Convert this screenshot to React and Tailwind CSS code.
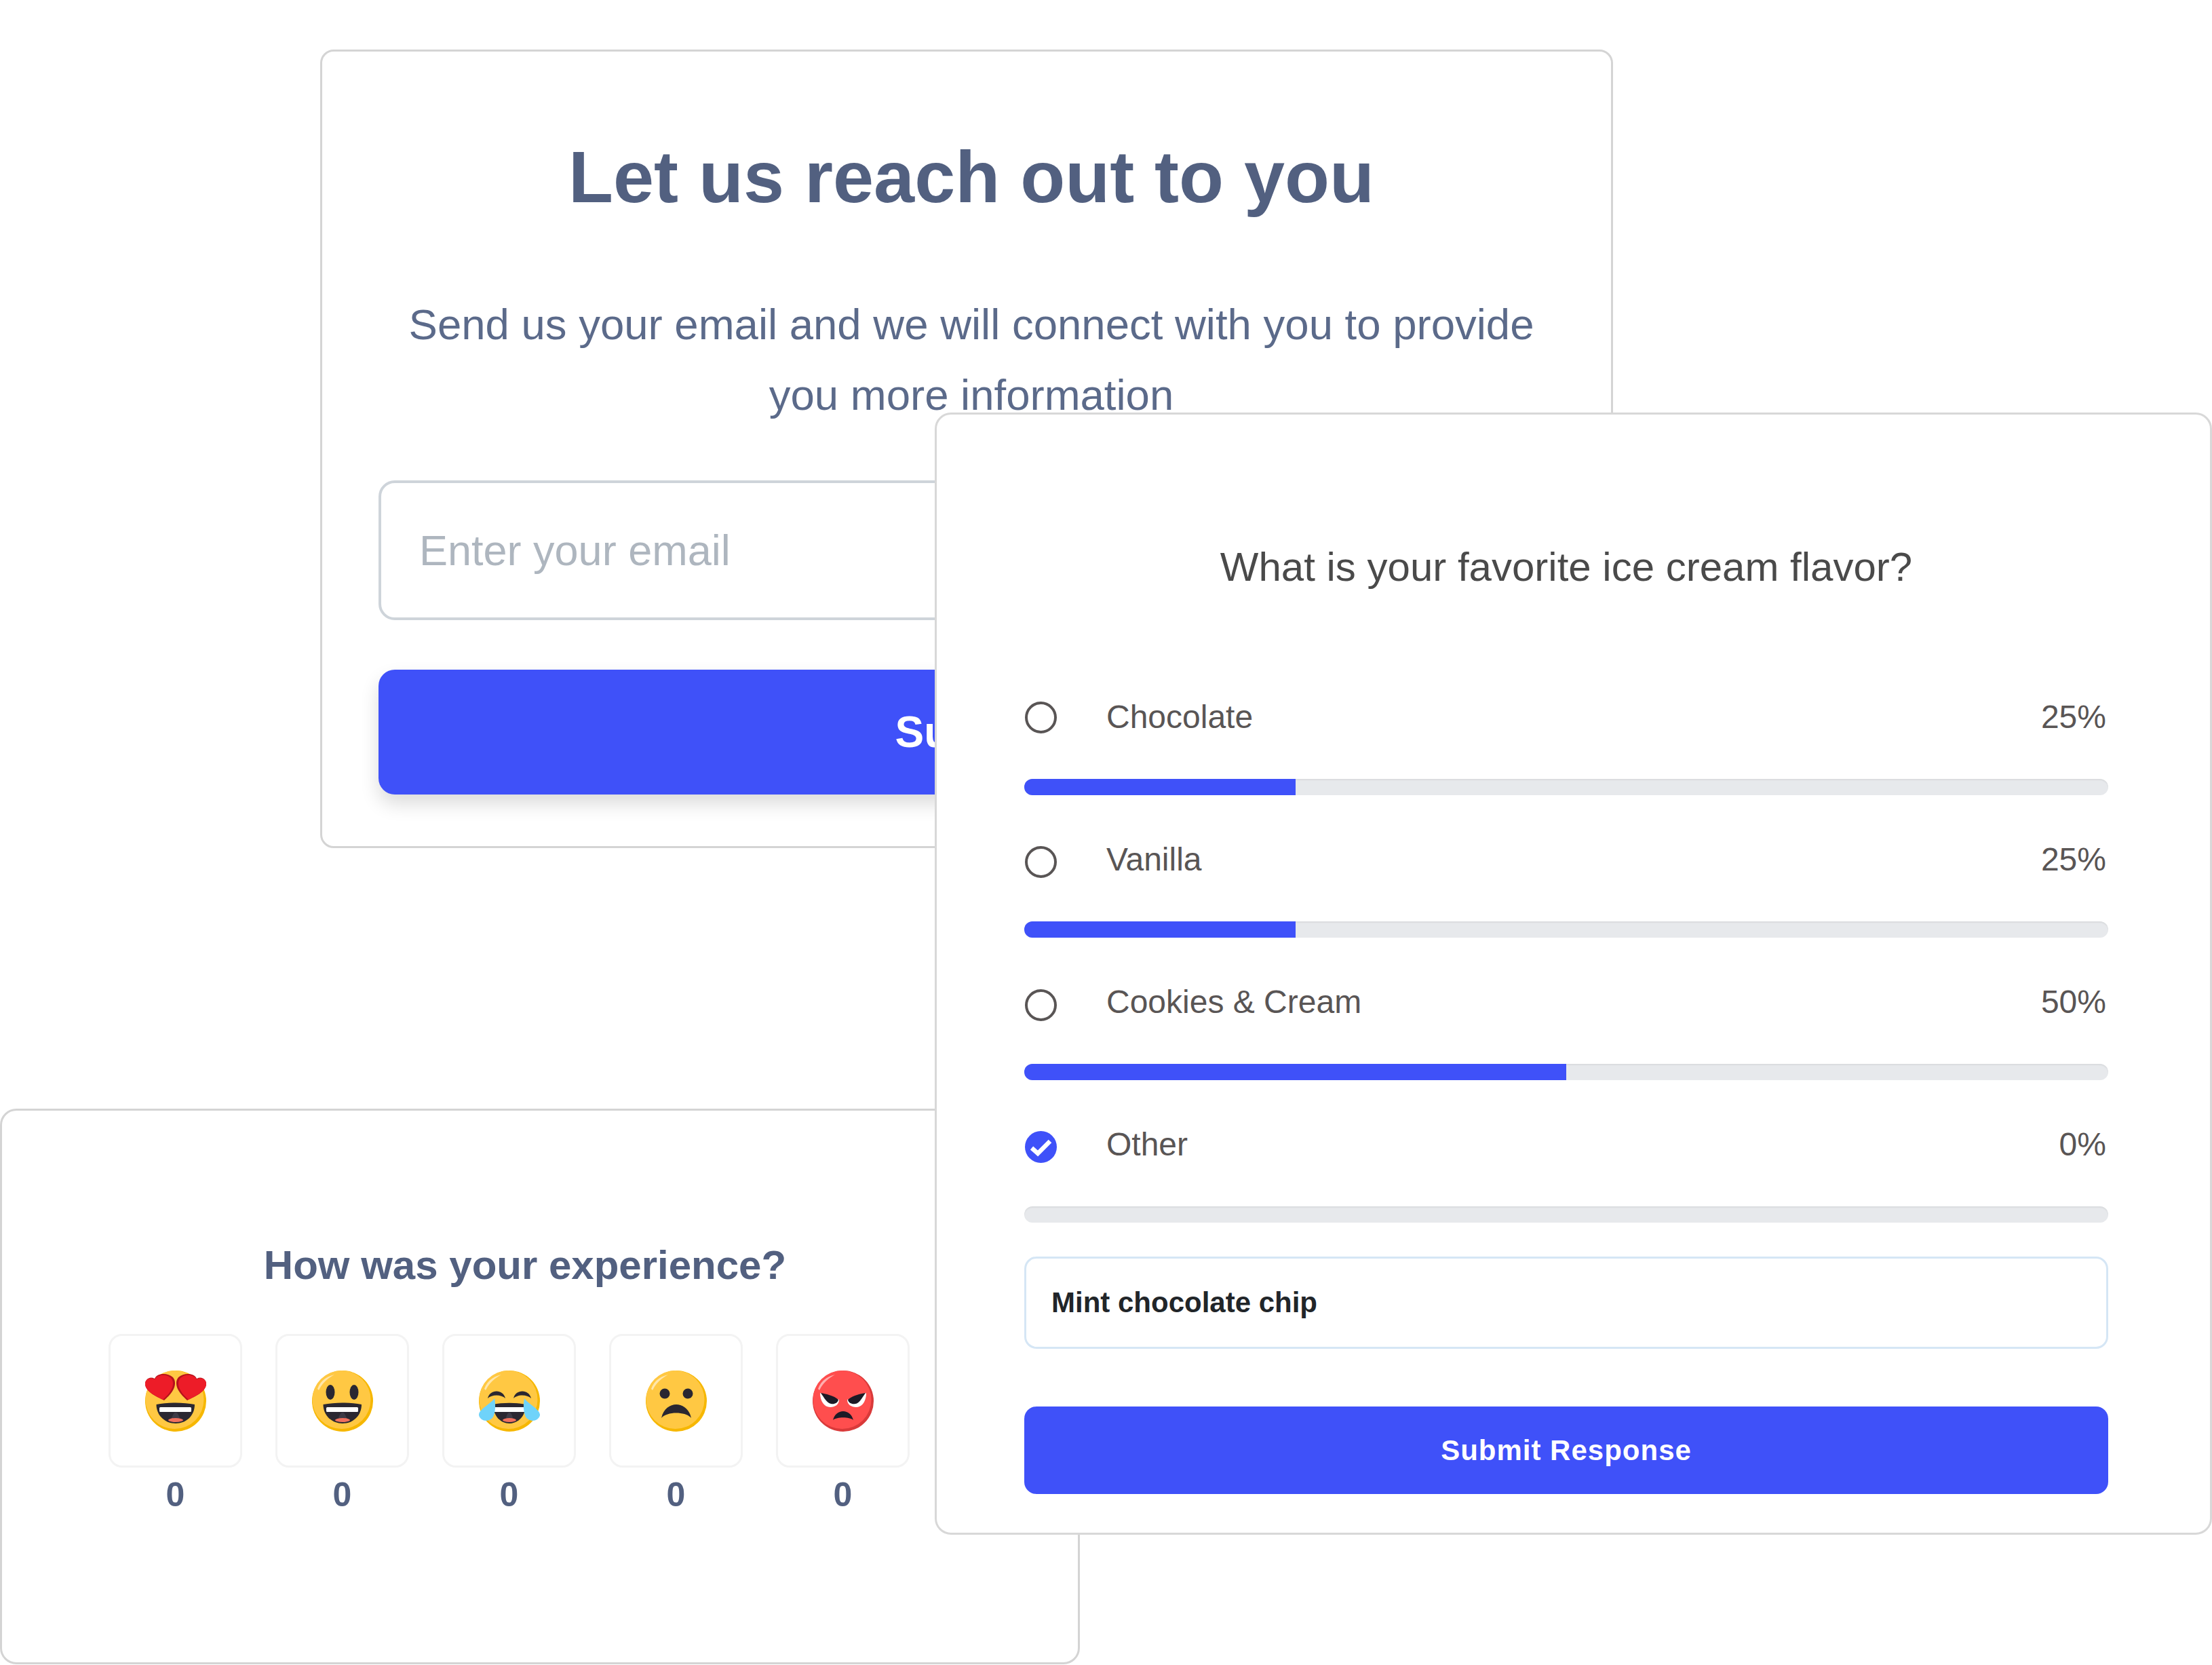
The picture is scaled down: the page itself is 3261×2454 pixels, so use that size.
import React from 'react';

const sans = "font-['Liberation_Sans','Arial',sans-serif]";

const options = [
  { label: 'Chocolate', pct: 25, dot: 'mt-[1px]' },
  { label: 'Vanilla', pct: 25, dot: 'mt-[7px]' },
  { label: 'Cookies & Cream', pct: 50, dot: 'mt-[9px]' },
  { label: 'Other', pct: 0, dot: 'mt-[7px]', checked: true },
];

// shared face: darker crescent below, lighter disc on top, small shine
const Face = ({ base = '#FFC843', edge = '#F6B700', children, w = 90 }) => (
  <svg width={w} height="90" viewBox="0 0 90 90">
    <circle cx="45" cy="45" r="45" fill={edge} />
    <circle cx="43.5" cy="43" r="43" fill={base} />
    <path d="M8 27C12 16 20 9 33 6C24 11 15 18 10 29Z" fill="#fff" opacity="0.55" />
    {children}
  </svg>
);

const Mouth = () => (
  <g>
    <path d="M16.5 50C34 46.5 56 46.5 73 50C73 67 60 78 45 78C30 78 16.5 67 16.5 50Z" fill="#2A2731" />
    <rect x="21" y="54" width="47" height="7" rx="1.5" fill="#fff" />
    <path d="M39 70C41 65 42 62 45 62C48 62 49 65 51 70Z" fill="#3D3A46" />
    <ellipse cx="45" cy="73" rx="11" ry="3" fill="#F0705F" />
  </g>
);

const Heart = ({ flip }) => (
  <g transform={flip ? 'translate(90 0) scale(-1 1)' : undefined}>
    <path d="M28 44C16 38 2 32 0 21C-1 13 7 8 14 12C17 4 32 2 41 10C46 16 44 24 41 29C37 36 32 40 28 44Z" fill="#B5121B" />
    <path d="M26 43C15 37 1.5 31 0 21C-1 13 7 9 14 13C17 6 31 4 38 11C43 17 41 24 38 29C35 35 30 39 26 43Z" fill="#ED1C28" />
  </g>
);

const emojis = [
  <Face key="love">
    <Mouth />
    <Heart />
    <Heart flip />
  </Face>,
  <Face key="smile">
    <ellipse cx="27" cy="32" rx="6.5" ry="11" fill="#2A2731" />
    <ellipse cx="62" cy="32" rx="6.5" ry="11" fill="#2A2731" />
    <Mouth />
  </Face>,
  <Face key="joy">
    <path d="M13 41C16 27 36 27 39 41C33 35 19 35 13 41Z" fill="#2A2731" />
    <path d="M51 41C54 27 74 27 77 41C71 35 57 35 51 41Z" fill="#2A2731" />
    <path d="M21 50C34 47 56 47 69 50C69 67 58 78 45 78C32 78 21 67 21 50Z" fill="#2A2731" />
    <rect x="21" y="54" width="48" height="7" fill="#fff" />
    <path d="M40 70C41 66 42 62 45 62C48 62 49 66 50 70Z" fill="#3D3A46" />
    <ellipse cx="45" cy="73" rx="10" ry="3" fill="#F0705F" />
    <path d="M23 41C25 52 24 60 22 66C19 76 3 77 0 66C-1 58 16 50 23 41Z" fill="#6FD3FA" />
    <path d="M67 41C65 52 66 60 68 66C71 76 87 77 90 66C91 58 74 50 67 41Z" fill="#6FD3FA" />
  </Face>,
  <Face key="sad">
    <circle cx="28" cy="34" r="7.5" fill="#2A2731" />
    <circle cx="62" cy="34" r="7.5" fill="#2A2731" />
    <path d="M23 70C26 56 36 50 45 50C54 50 64 56 67 70C59 60 31 60 23 70Z" fill="#2A2731" />
  </Face>,
  <Face key="angry" base="#FF4E4E" edge="#D93A3A">
    <path d="M11 33L39 43C39 50 33 54 26 54C17 54 11 45 11 33Z" fill="#fff" />
    <path d="M79 33L51 43C51 50 57 54 64 54C73 54 79 45 79 33Z" fill="#fff" />
    <path d="M12 33C18 34 32 37 38 43C37 48 32 50 27 49C21 48 17 40 12 33Z" fill="#1D1A26" />
    <path d="M78 33C72 34 58 37 52 43C53 48 58 50 63 49C69 48 73 40 78 33Z" fill="#1D1A26" />
    <path d="M30 73C32 65 38 60 45 60C52 60 58 65 60 73C54 68 36 68 30 73Z" fill="#1D1A26" />
  </Face>,
];

const OptionRow = ({ label, pct, checked, dot }) => (
  <div className="mb-[65px]">
    <div className="flex h-[60px] items-center text-[48px] text-[#595555]">
      {checked ? (
        <svg className={`ml-[1px] h-[47px] w-[47px] ${dot}`} viewBox="0 0 47 47">
          <circle cx="23.5" cy="23.5" r="23.5" fill="#3F51F9" />
          <path d="M10 25L19 33L37 15" fill="none" stroke="#fff" strokeWidth="6.5" />
        </svg>
      ) : (
        <span className={`ml-[1px] h-[47px] w-[47px] rounded-full border-[4px] border-[#595555] ${dot}`} />
      )}
      <span className="ml-[73px] flex-1">{label}</span>
      <span className="pr-[3px]">{pct}%</span>
    </div>
    <div className="mt-[61px] h-[24px] overflow-hidden rounded-full bg-[#e7e9ec] shadow-[inset_0_2px_2px_rgba(0,0,0,0.06)]">
      <div className="h-full bg-[#3F51F9]" style={{ width: `${pct}%` }} />
    </div>
  </div>
);

export default function App() {
  return (
    <div className={`relative h-[2454px] w-[3261px] overflow-hidden bg-white ${sans}`}>
      {/* lead form, sits at the back */}
      <section className="absolute left-[472px] top-[73px] h-[1177px] w-[1906px] rounded-[20px] border-[3px] border-[#d4d4d4] bg-white px-[83px]">
        <div className="pl-[14px] text-center">
          <h1 className="pt-[120px] text-[108px] font-bold leading-[130px] text-[#526080]">Let us reach out to you</h1>
          <p className="mt-[100px] text-[63.5px] leading-[104px] text-[#5B6A8A]">
            Send us your email and we will connect with you to provide
            <br />
            you more information
          </p>
        </div>
        <input
          className="mt-[74px] block h-[206px] w-full rounded-[24px] border-[4px] border-[#ced4da] bg-white pl-[56px] text-[63px] outline-none placeholder:text-[#aeb6bf]"
          placeholder="Enter your email"
        />
        <button className="mt-[73px] block h-[184px] w-full rounded-[24px] bg-[#3F51F9] pl-[6px] text-center text-[64px] font-bold text-white shadow-[0_14px_28px_rgba(0,0,0,0.14)]">
          Submit
        </button>
      </section>

      {/* emoji rating */}
      <section className="absolute left-0 top-[1634px] h-[819px] w-[1592px] rounded-[24px] border-[3px] border-[#d4d4d4] bg-white pl-[157px]">
        <div className="w-[1228px]">
          <h2 className="pt-[190px] text-center text-[60px] font-bold leading-[76px] text-[#526080]">
            How was your experience?
          </h2>
          <div className="mt-[63px] flex gap-[49px]">
            {emojis.map((emoji, i) => (
              <div key={i} className="w-[197px]">
                <div className="flex h-[197px] items-center justify-center rounded-[20px] border-[3px] border-[#f3f3f3] bg-white">
                  {emoji}
                </div>
                <div className="mt-[11px] text-center text-[50px] font-bold leading-[58px] text-[#526080]">0</div>
              </div>
            ))}
          </div>
        </div>
      </section>

      {/* poll, front card */}
      <section className="absolute left-[1378px] top-[608px] h-[1654px] w-[1883px] rounded-[24px] border-[3px] border-[#d8d8d8] bg-white pl-[129px] pr-[150px]">
        <h2 className="pt-[190px] text-center text-[60px] leading-[70px] text-[#4a4a4a]">What is your favorite ice cream flavor?</h2>
        <div className="mt-[156px]">
          {options.map((o) => (
            <OptionRow key={o.label} {...o} />
          ))}
        </div>
        <input
          readOnly
          defaultValue="Mint chocolate chip"
          className="-mt-[15px] block h-[136px] w-full rounded-[18px] border-[3px] border-[#d5e6f5] bg-white px-[37px] text-[42px] font-bold text-[#212529] outline-none"
        />
        <button className="mt-[85px] block h-[129px] w-full rounded-[18px] bg-[#3F51F9] text-center text-[42px] font-bold tracking-[1px] text-white">
          Submit Response
        </button>
      </section>
    </div>
  );
}
